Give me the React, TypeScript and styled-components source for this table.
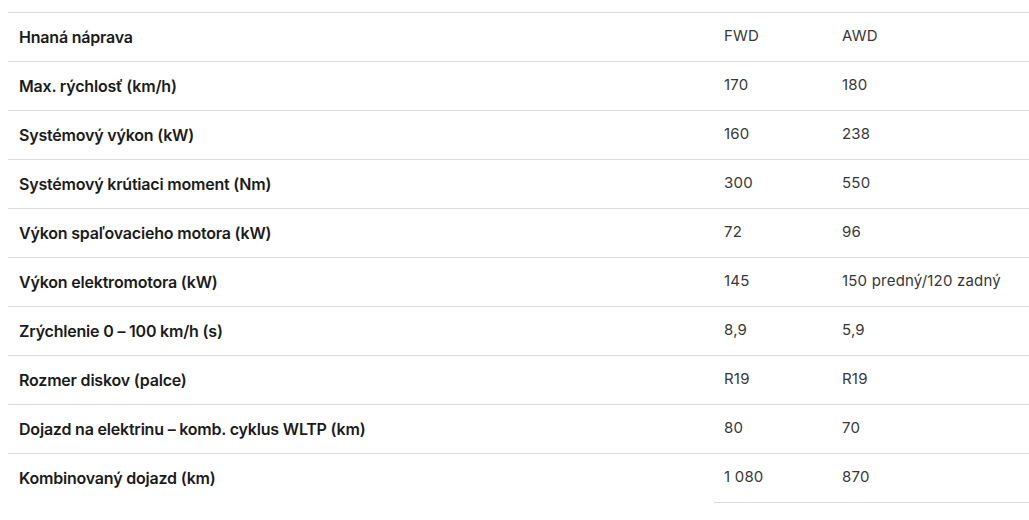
import React from 'react';
import styled, {createGlobalStyle} from 'styled-components';

interface Spec {
  label: string;
  fwd: string;
  awd: string;
}

const specs: Spec[] = [
  {label: 'Hnaná náprava', fwd: 'FWD', awd: 'AWD'},
  {label: 'Max. rýchlosť (km/h)', fwd: '170', awd: '180'},
  {label: 'Systémový výkon (kW)', fwd: '160', awd: '238'},
  {label: 'Systémový krútiaci moment (Nm)', fwd: '300', awd: '550'},
  {label: 'Výkon spaľovacieho motora (kW)', fwd: '72', awd: '96'},
  {label: 'Výkon elektromotora (kW)', fwd: '145', awd: '150 predný/120 zadný'},
  {label: 'Zrýchlenie 0 – 100 km/h (s)', fwd: '8,9', awd: '5,9'},
  {label: 'Rozmer diskov (palce)', fwd: 'R19', awd: 'R19'},
  {label: 'Dojazd na elektrinu – komb. cyklus WLTP (km)', fwd: '80', awd: '70'},
  {label: 'Kombinovaný dojazd (km)', fwd: '1 080', awd: '870'},
];

const GlobalStyle = createGlobalStyle`
  html, body {
    margin: 0;
    padding: 0;
    background: #fff;
    overflow: hidden;
  }
  body {
    font-family: Inter, "Noto Sans", sans-serif;
    color: #1b1b1b;
  }
`;

const Page = styled.div`
  padding: 12px 0 0 8px;
`;

const SpecTable = styled.table`
  width: 1021px;
  border-collapse: collapse;
  table-layout: fixed;
  border-top: 1px solid #dcdcdc;
`;

const LabelCell = styled.th<{$last?: boolean}>`
  width: 695px;
  height: 48px;
  padding: 0 0 0 11px;
  text-align: left;
  font-size: 16px;
  font-weight: 600;
  letter-spacing: -0.2px;
  color: #1b1b1b;
  border-bottom: ${({$last}) => ($last ? 'none' : '1px solid #dcdcdc')};
  vertical-align: middle;
`;

const ValueCell = styled.td<{$wide?: boolean}>`
  width: ${({$wide}) => ($wide ? 'auto' : '108px')};
  height: 44px;
  padding: 0 0 4px 10px;
  font-size: 15px;
  font-weight: 400;
  letter-spacing: 0.2px;
  color: #383838;
  border-bottom: 1px solid #dcdcdc;
  vertical-align: middle;
`;

export default function App() {
  return (
    <Page>
      <GlobalStyle />
      <SpecTable>
        <tbody>
          {specs.map((s, i) => {
            const last = i === specs.length - 1;
            return (
              <tr key={s.label}>
                <LabelCell scope="row" $last={last}>
                  {s.label}
                </LabelCell>
                <ValueCell>{s.fwd}</ValueCell>
                <ValueCell $wide>{s.awd}</ValueCell>
              </tr>
            );
          })}
        </tbody>
      </SpecTable>
    </Page>
  );
}
